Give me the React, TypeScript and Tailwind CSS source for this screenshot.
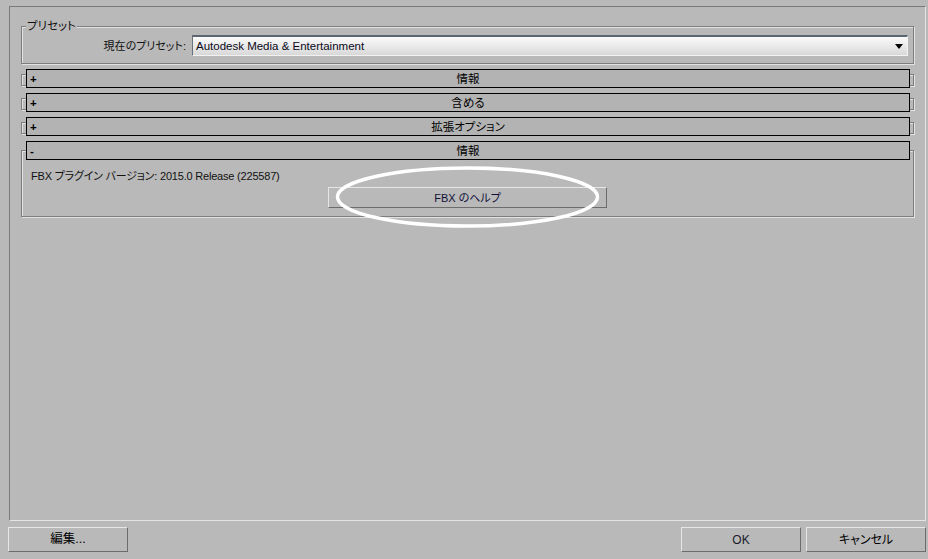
import React from "react";

const font = "font-['Liberation_Sans','Noto_Sans_CJK_JP',sans-serif] [font-feature-settings:'palt']";
const etched = "border border-[#7e7e7e] shadow-[inset_1px_1px_0_#e2e2e2,1px_1px_0_#e2e2e2]";
const raised = "border border-t-[#e6e6e6] border-l-[#e6e6e6] border-r-[#6c6c6c] border-b-[#6c6c6c] bg-[#b9b9b9]";

const RolloutHeader = ({ title, open }: { title: string; open?: boolean }) => (
  <div className="relative z-10 ml-[5px] mr-[4px] grid h-[19px] grid-cols-[24px_1fr_24px] items-center border border-black bg-[#b3b3b3] text-[11.5px] leading-[14px] text-black">
    <span className="pl-[3px] font-bold">{open ? "-" : "+"}</span>
    <span className="text-center">{title}</span>
    <span />
  </div>
);

const Rollout = ({ title }: { title: string }) => (
  <div className="mt-[7px]">
    <RolloutHeader title={title} />
    <div className={`-mt-[14px] h-[12px] ${etched}`} />
  </div>
);

export default function App() {
  return (
    <div className={`flex h-[559px] w-[928px] flex-col bg-[#b9b9b9] pl-[8px] pr-[2px] pt-[6px] ${font}`}>
      {/* main panel */}
      <div className="ml-[1px] flex h-[515px] w-[917px] flex-col border border-t-[#7a7a7a] border-l-[#7a7a7a] border-r-[#e4e4e4] border-b-[#e4e4e4] pl-[11px] pr-[11px] pt-[12px]">
        <fieldset className={`pb-[7px] ${etched}`}>
          <legend className="ml-[4px] bg-[#b9b9b9] px-[1px] text-[11.5px] leading-[14px] text-[#111]">プリセット</legend>
          <div className="mt-[2px] flex items-center pr-[5px]">
            <span className="w-[164px] text-right text-[11px] leading-[14px] text-[#111]">現在のプリセット:</span>
            <div className="ml-[6px] flex h-[21px] flex-1 items-center justify-between border border-t-2 border-t-[#5c6670] border-l-[#6a737b] border-r-[#f2f2f2] border-b-[#f2f2f2] bg-gradient-to-b from-[#fbfbfb] to-[#d8d8d8] pl-[3px] pr-[4px]">
              <span className="text-[11.5px] leading-[14px] text-[#0a0a1a]">Autodesk Media &amp; Entertainment</span>
              <svg width="8" height="5" viewBox="0 0 8 5">
                <path d="M0 0H8L4 5Z" fill="#000" />
              </svg>
            </div>
          </div>
        </fieldset>

        <div className="mt-[5px]">
          <div>
            <RolloutHeader title="情報" />
            <div className={`-mt-[14px] h-[12px] ${etched}`} />
          </div>
          <Rollout title="含める" />
          <Rollout title="拡張オプション" />
          <div className="mt-[7px]">
            <RolloutHeader title="情報" open />
            <div className={`-mt-[10px] h-[67px] pt-[18px] ${etched}`}>
              <div className="pl-[9px] text-[11px] leading-[14px] tracking-[-0.2px] text-[#111]">FBX プラグイン バージョン: 2015.0 Release (225587)</div>
              <div className="relative mx-auto mt-[4px] w-[279px]">
                <button className={`flex h-[21px] w-full items-center justify-center text-[11px] leading-[14px] text-[#101038] ${raised}`}>
                  FBX のヘルプ
                </button>
                <svg className="pointer-events-none absolute left-[6px] top-[-22px]" width="267" height="64" viewBox="0 0 267 64">
                  <ellipse cx="133.5" cy="32" rx="130" ry="29" fill="none" stroke="#ffffff" strokeWidth="3.5" />
                </svg>
              </div>
            </div>
          </div>
        </div>
      </div>

      {/* bottom buttons */}
      <div className="mt-[6px] flex items-start justify-between">
        <button className={`flex h-[25px] w-[120px] items-center justify-center text-[12.5px] text-black ${raised}`}>編集...</button>
        <div className="flex gap-[5px]">
          <button className={`flex h-[25px] w-[120px] items-center justify-center text-[12px] text-[#1a1a2a] ${raised}`}>OK</button>
          <button className={`flex h-[25px] w-[120px] items-center justify-center text-[12px] text-black ${raised}`}>キャンセル</button>
        </div>
      </div>
    </div>
  );
}
